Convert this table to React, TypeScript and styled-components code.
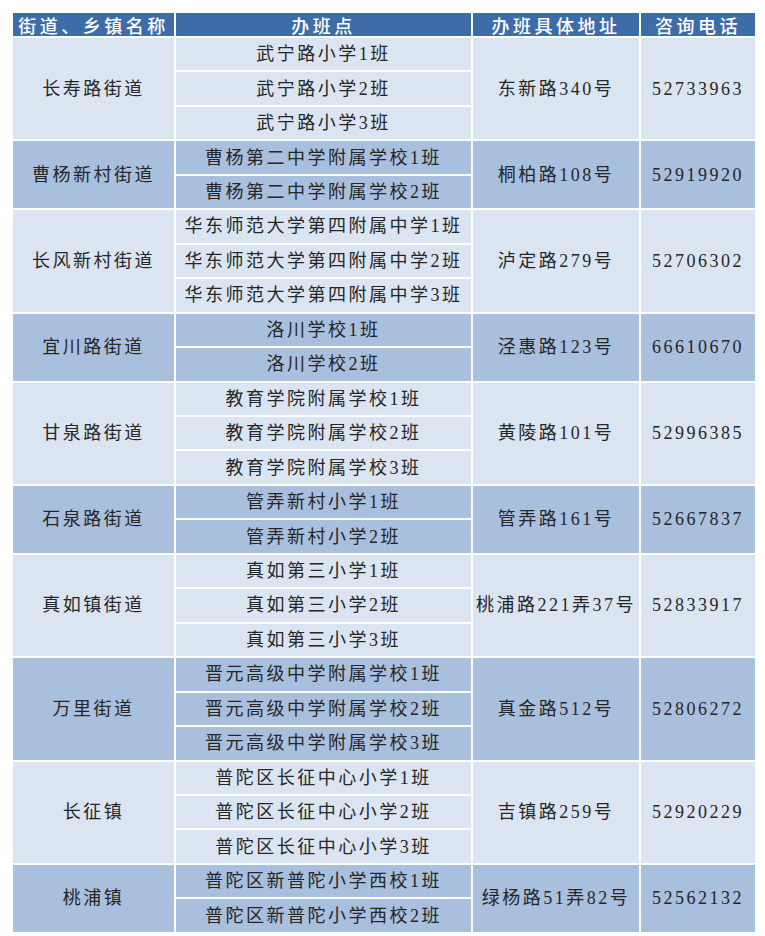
import styled, { createGlobalStyle } from "styled-components";

const GlobalStyle = createGlobalStyle`
  html, body {
    margin: 0;
    padding: 0;
    background: #ffffff;
  }
`;

const Page = styled.div`
  padding: 11px 0 0 11px;
`;

const Table = styled.table`
  width: 744px;
  border-collapse: collapse;
  table-layout: fixed;
  font-family: "Liberation Serif", "Noto Sans CJK SC", serif;
  color: #262626;
`;

const HeadCell = styled.th`
  height: 23px;
  padding: 0;
  border: 2px solid #ffffff;
  background: #3e6ca8;
  color: #ffffff;
  font-family: "Noto Sans CJK SC", sans-serif;
  font-size: 18px;
  font-weight: 500;
  letter-spacing: 3.5px;
  line-height: 22px;
  text-align: center;
  white-space: nowrap;
`;

const Cell = styled.td<{ $dark: boolean }>`
  height: 32.46px;
  padding: 0;
  border: 2px solid #ffffff;
  background: ${(p) => (p.$dark ? "#a8bfde" : "#dbe5f1")};
  font-size: 18px;
  letter-spacing: 2.5px;
  line-height: 24px;
  text-align: center;
  white-space: nowrap;
`;

type District = {
  name: string;
  classes: string[];
  address: string;
  phone: string;
};

const districts: District[] = [
  { name: "长寿路街道", classes: ["武宁路小学1班", "武宁路小学2班", "武宁路小学3班"], address: "东新路340号", phone: "52733963" },
  { name: "曹杨新村街道", classes: ["曹杨第二中学附属学校1班", "曹杨第二中学附属学校2班"], address: "桐柏路108号", phone: "52919920" },
  { name: "长风新村街道", classes: ["华东师范大学第四附属中学1班", "华东师范大学第四附属中学2班", "华东师范大学第四附属中学3班"], address: "泸定路279号", phone: "52706302" },
  { name: "宜川路街道", classes: ["洛川学校1班", "洛川学校2班"], address: "泾惠路123号", phone: "66610670" },
  { name: "甘泉路街道", classes: ["教育学院附属学校1班", "教育学院附属学校2班", "教育学院附属学校3班"], address: "黄陵路101号", phone: "52996385" },
  { name: "石泉路街道", classes: ["管弄新村小学1班", "管弄新村小学2班"], address: "管弄路161号", phone: "52667837" },
  { name: "真如镇街道", classes: ["真如第三小学1班", "真如第三小学2班", "真如第三小学3班"], address: "桃浦路221弄37号", phone: "52833917" },
  { name: "万里街道", classes: ["晋元高级中学附属学校1班", "晋元高级中学附属学校2班", "晋元高级中学附属学校3班"], address: "真金路512号", phone: "52806272" },
  { name: "长征镇", classes: ["普陀区长征中心小学1班", "普陀区长征中心小学2班", "普陀区长征中心小学3班"], address: "吉镇路259号", phone: "52920229" },
  { name: "桃浦镇", classes: ["普陀区新普陀小学西校1班", "普陀区新普陀小学西校2班"], address: "绿杨路51弄82号", phone: "52562132" },
];

export default function App() {
  return (
    <Page>
      <GlobalStyle />
      <Table>
        <colgroup>
          <col style={{ width: 163 }} />
          <col style={{ width: 297 }} />
          <col style={{ width: 168 }} />
          <col style={{ width: 116 }} />
        </colgroup>
        <thead>
          <tr>
            <HeadCell>街道、乡镇名称</HeadCell>
            <HeadCell>办班点</HeadCell>
            <HeadCell>办班具体地址</HeadCell>
            <HeadCell>咨询电话</HeadCell>
          </tr>
        </thead>
        <tbody>
          {districts.map((d, i) =>
            d.classes.map((c, j) => (
              <tr key={`${i}-${j}`}>
                {j === 0 && (
                  <Cell $dark={i % 2 === 1} rowSpan={d.classes.length}>
                    {d.name}
                  </Cell>
                )}
                <Cell $dark={i % 2 === 1}>{c}</Cell>
                {j === 0 && (
                  <Cell $dark={i % 2 === 1} rowSpan={d.classes.length}>
                    {d.address}
                  </Cell>
                )}
                {j === 0 && (
                  <Cell $dark={i % 2 === 1} rowSpan={d.classes.length}>
                    {d.phone}
                  </Cell>
                )}
              </tr>
            ))
          )}
        </tbody>
      </Table>
    </Page>
  );
}
